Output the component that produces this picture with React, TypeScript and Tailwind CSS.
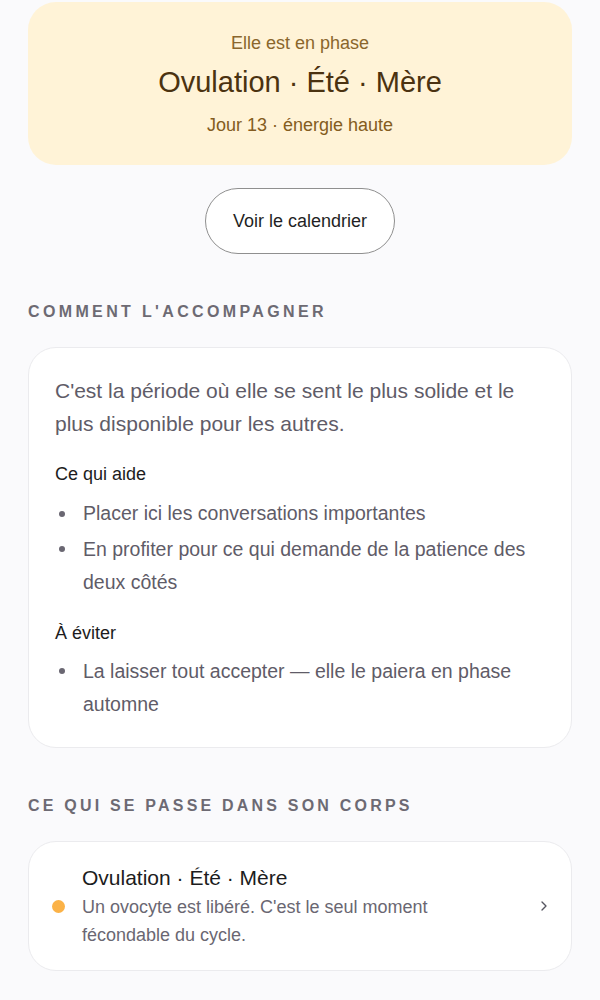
import { ChevronRight } from "lucide-react";

const helps = [
  "Placer ici les conversations importantes",
  "En profiter pour ce qui demande de la patience des deux côtés",
];

const avoid = ["La laisser tout accepter — elle le paiera en phase automne"];

function BulletList({ items }: { items: string[] }) {
  return (
    <ul className="flex flex-col gap-[2px]">
      {items.map((item) => (
        <li key={item} className="flex text-[19.5px] leading-[33.5px] text-[#5f5c68]">
          <span className="flex h-[33.5px] w-[28px] shrink-0 items-center pl-[4px]">
            <span className="h-[6px] w-[6px] rounded-full bg-[#6a6772]" />
          </span>
          <span>{item}</span>
        </li>
      ))}
    </ul>
  );
}

export default function App() {
  return (
    <div className="min-h-screen bg-[#fafafc] px-[28px] pt-[2px] pb-10 font-['Liberation_Sans',Arial,sans-serif]">
      <section className="flex flex-col items-center rounded-[28px] bg-[#fff3d7] pt-[29px] pb-[28px] text-center">
        <p className="text-[18px] leading-[24px] text-[#8a662c]">Elle est en phase</p>
        <h1 className="mt-[9px] text-[29px] leading-[36px] text-[#4b3210]">Ovulation · Été · Mère</h1>
        <p className="mt-[13px] text-[18px] leading-[24px] text-[#845c20]">Jour 13 · énergie haute</p>
      </section>

      <div className="mt-[23px] flex justify-center">
        <button className="h-[66px] w-[190px] rounded-full border border-[#8f8f8f] bg-white text-[18px] text-[#1f1f24]">
          Voir le calendrier
        </button>
      </div>

      <h2 className="mt-[48px] text-[16px] leading-[20px] font-bold tracking-[0.21em] text-[#6d6a73]">
        COMMENT L'ACCOMPAGNER
      </h2>

      <section className="mt-[25px] rounded-[28px] border border-[#ebebee] bg-white px-[26px] pt-[26px] pb-[25px]">
        <p className="text-[21px] leading-[33px] text-[#5f5c68]">
          C'est la période où elle se sent le plus solide et le plus disponible pour les autres.
        </p>

        <h3 className="mt-[22px] text-[18px] leading-[24px] text-[#1c1c20]">Ce qui aide</h3>
        <div className="mt-[11px]">
          <BulletList items={helps} />
        </div>

        <h3 className="mt-[21px] text-[18px] leading-[24px] text-[#1c1c20]">À éviter</h3>
        <div className="mt-[10px]">
          <BulletList items={avoid} />
        </div>
      </section>

      <h2 className="mt-[48px] text-[16px] leading-[20px] font-bold tracking-[0.2em] text-[#6d6a73]">
        CE QUI SE PASSE DANS SON CORPS
      </h2>

      <section className="mt-[25px] flex items-center rounded-[28px] border border-[#ebebee] bg-white pt-[22px] pb-[21px] pl-[23px] pr-[19px]">
        <span className="h-[13px] w-[13px] shrink-0 rounded-full bg-[#fbb247]" />
        <div className="ml-[17px] flex-1">
          <p className="text-[21px] leading-[28px] text-[#1c1c20]">Ovulation · Été · Mère</p>
          <p className="mt-px text-[18px] leading-[28px] text-[#6a6772]">
            Un ovocyte est libéré. C'est le seul moment fécondable du cycle.
          </p>
        </div>
        <ChevronRight className="ml-4 shrink-0 text-[#555560]" size={16} strokeWidth={2} />
      </section>
    </div>
  );
}
